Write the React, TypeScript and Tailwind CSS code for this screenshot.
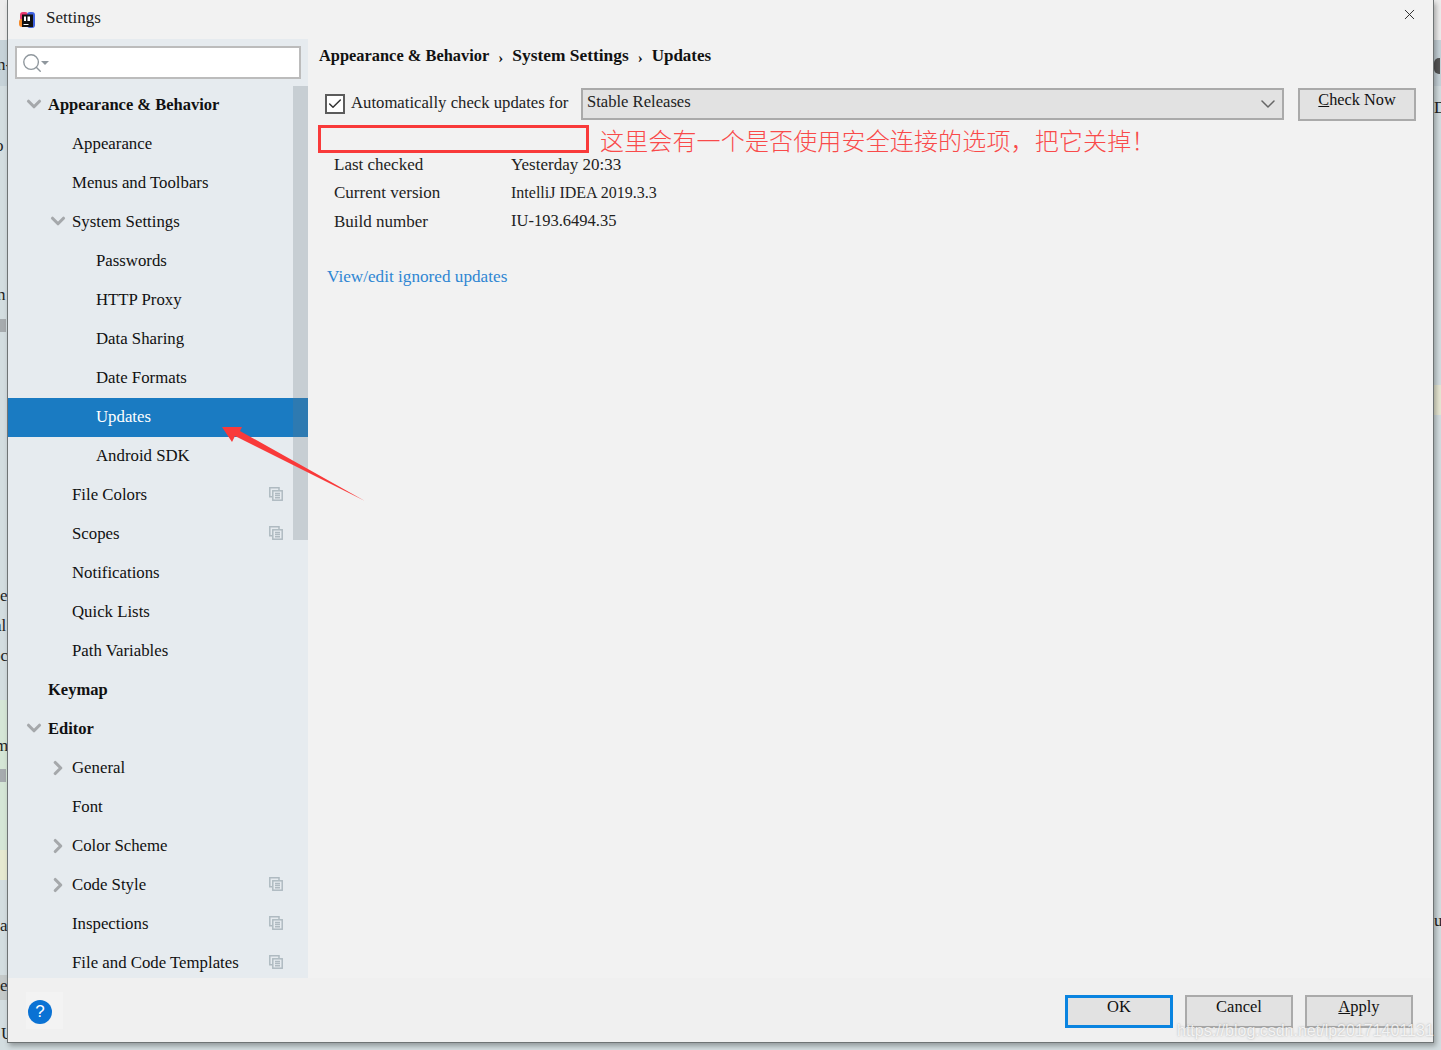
import React from 'react';
import { ChevronDown, ChevronRight, Search, X, Check } from 'lucide-react';

const tree = [
  { label: 'Appearance & Behavior', level: 0, arrow: 'down', bold: true },
  { label: 'Appearance', level: 1 },
  { label: 'Menus and Toolbars', level: 1 },
  { label: 'System Settings', level: 1, arrow: 'down' },
  { label: 'Passwords', level: 2 },
  { label: 'HTTP Proxy', level: 2 },
  { label: 'Data Sharing', level: 2 },
  { label: 'Date Formats', level: 2 },
  { label: 'Updates', level: 2, selected: true },
  { label: 'Android SDK', level: 2 },
  { label: 'File Colors', level: 1, copy: true },
  { label: 'Scopes', level: 1, copy: true },
  { label: 'Notifications', level: 1 },
  { label: 'Quick Lists', level: 1 },
  { label: 'Path Variables', level: 1 },
  { label: 'Keymap', level: 0, bold: true },
  { label: 'Editor', level: 0, arrow: 'down', bold: true },
  { label: 'General', level: 1, arrow: 'right' },
  { label: 'Font', level: 1 },
  { label: 'Color Scheme', level: 1, arrow: 'right' },
  { label: 'Code Style', level: 1, arrow: 'right', copy: true },
  { label: 'Inspections', level: 1, copy: true },
  { label: 'File and Code Templates', level: 1, copy: true },
];

// bits of the window behind the dialog that stay visible at its edges
const behind = [
  { text: 'n-', x: -3, y: 54 },
  { text: 'o', x: -5, y: 135 },
  { text: 'n', x: -3, y: 284 },
  { text: 'e', x: 0, y: 585 },
  { text: 'al', x: -6, y: 615 },
  { text: 'oc', x: -8, y: 645 },
  { text: 'm', x: -5, y: 735 },
  { text: 'a', x: 0, y: 915 },
  { text: 'e', x: 0, y: 975 },
  { text: 'U', x: 1, y: 1023 },
  { text: 'D', x: 1434, y: 97 },
  { text: 'u', x: 1434, y: 910 },
];

const CopyIcon = () => (
  <svg width="14" height="14" viewBox="0 0 14 14" fill="none" stroke="#afbac1" strokeWidth="1.5">
    <path d="M10 3V.8H.8v9H3" />
    <rect x="3.8" y="3.8" width="9.4" height="9.4" />
    <path d="M6 6.5h5M6 8.5h5M6 10.7h5" />
  </svg>
);

const Row = ({ item }: { item: (typeof tree)[number] }) => {
  const pad = item.level === 0 ? 'pl-[40px]' : item.level === 1 ? 'pl-[64px]' : 'pl-[88px]';
  const arrowPos = item.level === 0 ? 'left-[15px]' : 'left-[39px]';
  return (
    <div className={`relative h-[39px] flex items-center shrink-0 ${pad} ${item.selected ? 'bg-[#1a7bc2] text-white' : 'text-[#111]'} ${item.bold ? 'font-bold text-[16.5px]' : 'text-[16.8px] pb-[2px]'}`}>
      {item.arrow === 'down' && (
        <ChevronDown size={22} strokeWidth={3.4} className={`absolute ${arrowPos} top-[7px] text-[#a5a8ab]`} />
      )}
      {item.arrow === 'right' && (
        <ChevronRight size={22} strokeWidth={3.4} className={`absolute ${arrowPos} top-[8px] text-[#a5a8ab]`} />
      )}
      <span className="whitespace-nowrap">{item.label}</span>
      {item.copy && <span className="absolute left-[261px] top-[11px] flex"><CopyIcon /></span>}
    </div>
  );
};

export default function App() {
  return (
    <div className="relative w-[1441px] h-[1050px] overflow-hidden bg-[#d3dde0] font-['Liberation_Serif',serif]">
      {/* desktop behind the dialog */}
      <div className="absolute left-0 top-0 w-full h-[40px] bg-[#ececec]"></div>
      <div className="absolute left-0 top-[40px] w-full h-[46px] bg-[#c6d2d8]"></div>
      <div className="absolute left-0 top-[700px] w-[8px] h-[150px] bg-[#d5e6d6]"></div>
      <div className="absolute left-0 top-[850px] w-[8px] h-[30px] bg-[#e6e9d0]"></div>
      <div className="absolute left-0 top-[975px] w-[8px] h-[25px] bg-[#c4c9c9]"></div>
      <div className="absolute left-0 top-[319px] w-[6px] h-[13px] bg-[#a6abae]"></div>
      <div className="absolute left-0 top-[769px] w-[6px] h-[13px] bg-[#a6abae]"></div>
      <div className="absolute left-[1434px] top-[385px] w-[7px] h-[30px] bg-[#e6e6d2]"></div>
      <div className="absolute left-[1434px] top-[58px] w-[6px] h-[16px] rounded-l-[5px] bg-[#555]"></div>
      {behind.map(b => (
        <span key={`${b.text}${b.y}`} className="absolute text-[17px] leading-[22px] text-[#222]" style={{ left: b.x, top: b.y }}>{b.text}</span>
      ))}

      {/* dialog */}
      <div className="absolute left-[7px] top-0 w-[1427px] h-[1043px] flex flex-col bg-[#f2f2f2] border-x border-b border-[#6f7475] shadow-[2px_3px_5px_rgba(0,0,0,0.3)]">
        <div className="h-[39px] shrink-0 flex items-start">
          <svg width="18" height="18" viewBox="0 0 18 18" className="mt-[11px] ml-[10px]">
            <rect x="2" y="1" width="8" height="9" rx="3" fill="#e8386f" />
            <rect x="1" y="8" width="7" height="8" rx="3" fill="#f58a2a" />
            <rect x="9" y="1" width="8" height="16" rx="3" fill="#3f62e0" />
            <rect x="4" y="3.5" width="11" height="12.5" fill="#111" />
            <rect x="5.5" y="13" width="5" height="1" fill="#fff" />
            <rect x="6" y="5.5" width="2" height="4.5" fill="#fff" />
            <rect x="9.5" y="5.5" width="2.5" height="4.5" fill="#fff" />
          </svg>
          <span className="ml-[10px] mt-[5px] text-[17px] text-[#222]">Settings</span>
          <X size={17} strokeWidth={1.3} className="ml-auto mr-[15px] mt-[6px] text-[#222]" />
        </div>
        <div className="flex flex-1 min-h-0">
          {/* sidebar */}
          <div className="relative w-[300px] h-[940px] shrink-0 bg-[#e6ebef] flex flex-col overflow-hidden">
            <div className="mx-[7px] mt-[7px] h-[33px] shrink-0 bg-white border-2 border-[#bcbcbc] flex items-center pl-[4px]">
              <Search size={22} strokeWidth={1.5} className="text-[#8f979d]" />
              <span className="-ml-[2px] mt-[1px] w-0 h-0 border-x-[4px] border-x-transparent border-t-[4px] border-t-[#8f979d]"></span>
            </div>
            <div className="mt-[7px] flex flex-col">
              {tree.map(t => <Row key={t.label} item={t} />)}
            </div>
            {/* scrollbar */}
            <div className="absolute left-[285px] top-[47px] w-[15px] h-[454px] bg-[#6a7680]/25"></div>
          </div>
          {/* content */}
          <div className="flex-1 flex flex-col relative">
            <div className="flex items-center pl-[11px] mt-[5px] h-[24px] font-bold text-[#111] whitespace-nowrap">
              <span className="text-[16.4px]">Appearance &amp; Behavior</span>
              <span className="mx-[9px] mt-[4px] text-[15px]">›</span>
              <span className="text-[17.4px] -mt-[1px]">System Settings</span>
              <span className="mx-[9px] mt-[4px] text-[15px]">›</span>
              <span className="text-[17px]">Updates</span>
            </div>
            <div className="flex items-start pl-[17px] mt-[20px] h-[33px]">
              <span className="mt-[6px] w-[20px] h-[20px] border-2 border-[#5c5c5c] bg-white flex items-center justify-center">
                <Check size={18} strokeWidth={2.2} className="text-[#333]" />
              </span>
              <span className="ml-[6px] mt-[2px] w-[217px] text-[16.7px] text-[#222] whitespace-nowrap">Automatically check updates for</span>
              <div className="ml-[13px] w-[703px] h-[32px] border-2 border-[#aaaaaa] bg-[#e2e2e2] flex items-center justify-between pl-[4px] pr-[2px] text-[16.6px] text-[#222]">
                <span className="-mt-[3px]">Stable Releases</span>
                <ChevronDown size={24} strokeWidth={1.5} className="text-[#666]" />
              </div>
              <button className="ml-[14px] w-[118px] h-[33px] border-2 border-[#aaaaaa] bg-[#e2e2e2] text-[16.3px] leading-[18px] text-[#111] pb-[10px]">
                <u>C</u>heck Now
              </button>
            </div>
            <div className="mt-[29px] ml-[26px] grid grid-cols-[177px_1fr] auto-rows-[28.5px] text-[17px] text-[#222] items-center">
              <span>Last checked</span><span>Yesterday 20:33</span>
              <span>Current version</span><span className="text-[16px]">IntelliJ IDEA 2019.3.3</span>
              <span>Build number</span><span className="text-[16.5px]">IU-193.6494.35</span>
            </div>
            <div className="mt-[28px] ml-[19px] text-[17.2px] text-[#2f86d3]">View/edit ignored updates</div>
          </div>
        </div>
        <div className="absolute left-0 right-0 bottom-0 h-[64px] bg-[#f0f0f0] flex items-start">
          <div className="ml-[18px] mt-[14px] w-[37px] h-[37px] bg-[#f3f3f3] pl-[2px] pt-[8px]">
            <span className="w-[24px] h-[24px] rounded-full bg-[#0a72d4] text-white text-[17px] flex items-center justify-center font-['Liberation_Sans',sans-serif]">?</span>
          </div>
          <div className="ml-auto mr-[20px] mt-[17px] flex gap-[12px]">
            <button className="w-[108px] h-[33px] border-[3px] border-[#0a84e0] bg-[#e2e2e2] text-[16.5px] leading-[18px] text-[#111] pb-[10px]">OK</button>
            <button className="w-[108px] h-[33px] border-2 border-[#aaaaaa] bg-[#e2e2e2] text-[16.5px] leading-[18px] text-[#111] pb-[9px]">Cancel</button>
            <button className="w-[108px] h-[33px] border-2 border-[#aaaaaa] bg-[#e2e2e2] text-[16.5px] leading-[18px] text-[#111] pb-[9px]"><u>A</u>pply</button>
          </div>
        </div>
      </div>

      {/* annotation drawn over the screenshot */}
      <div className="absolute left-[318px] top-[125px] w-[271px] h-[28px] border-[3px] border-[#f93a3a]"></div>
      <div className="absolute left-[600px] top-[125px] text-[24px] leading-[30px] tracking-[0.15px] text-[#f94a4a] font-['Noto_Sans_CJK_SC',sans-serif] font-light whitespace-nowrap">这里会有一个是否使用安全连接的选项，把它关掉！</div>
      <svg className="absolute left-[220px] top-[420px]" width="150" height="85" viewBox="0 0 150 85">
        <path d="M2 7 L22 7 L20 11 L145 81 L15 16 L12 22 Z" fill="#f93a3a" />
      </svg>
      <div className="absolute left-[1177px] top-[1021px] text-[16px] leading-[20px] text-white/80 [text-shadow:0_0_2px_rgba(90,90,90,0.5)] font-['Liberation_Sans',sans-serif] whitespace-nowrap">https://blog.csdn.net/lp20171401131</div>
    </div>
  );
}
